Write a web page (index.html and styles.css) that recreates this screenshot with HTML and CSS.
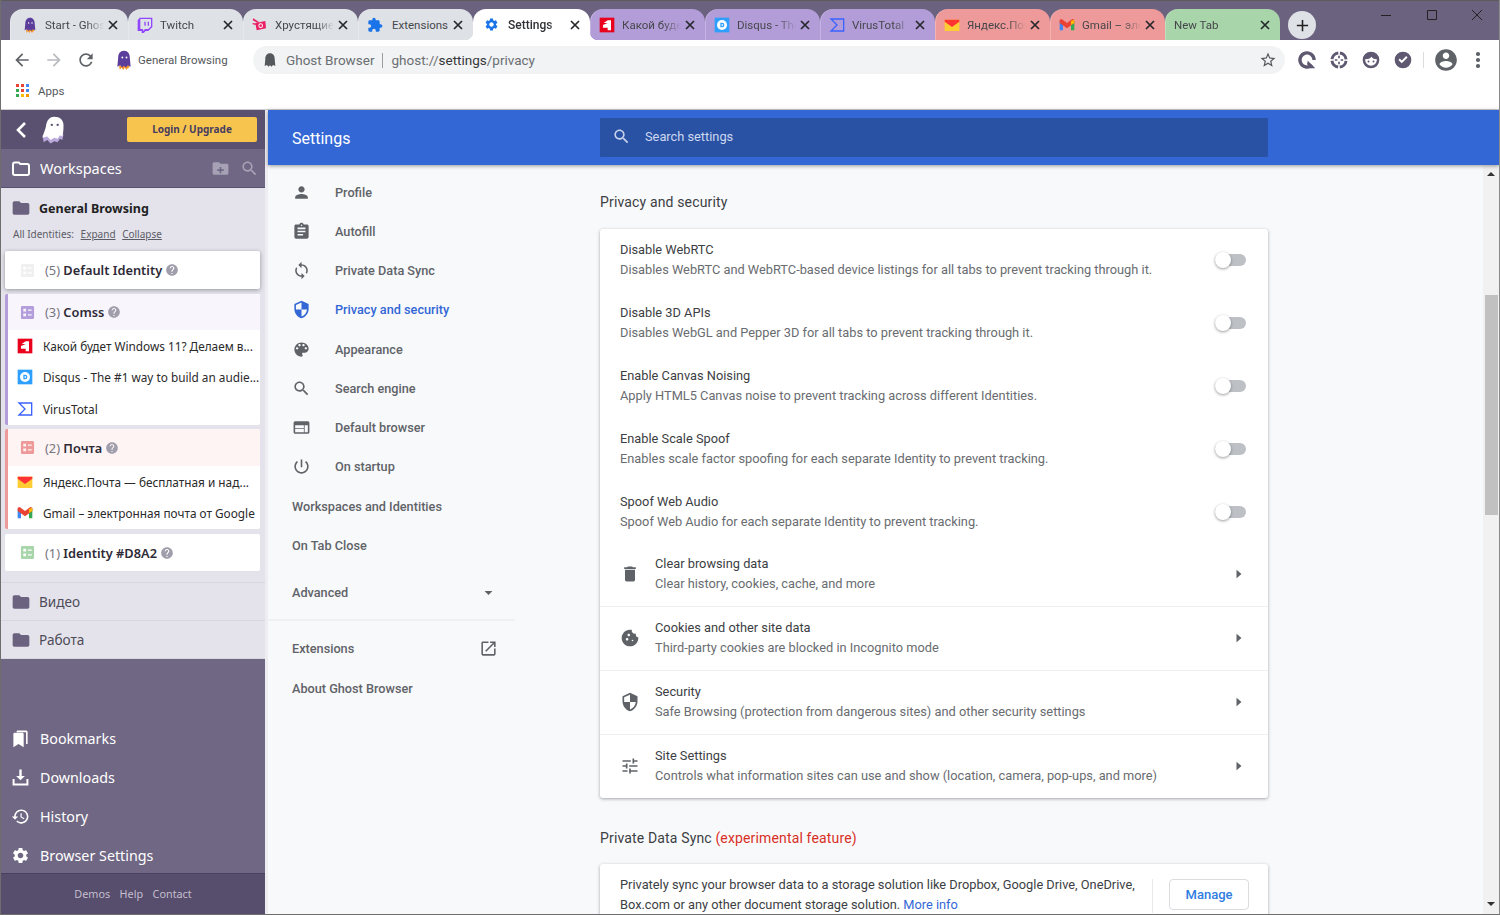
FILE: index.html
```html
<!DOCTYPE html>
<html lang="en">
<head>
  <meta charset="UTF-8">
  <title>Settings - Privacy and security</title>
  <link rel="stylesheet" href="styles.css">
</head>
<body>
  <svg class="sprite" xmlns="http://www.w3.org/2000/svg">
    <symbol id="i-close" viewBox="0 0 10 10"><path d="M1 1l8 8M9 1L1 9" fill="none" stroke="currentColor" stroke-width="1.7"/></symbol>
    <symbol id="i-person" viewBox="0 0 24 24"><path d="M12 12c2.21 0 4-1.79 4-4s-1.79-4-4-4-4 1.79-4 4 1.79 4 4 4zm0 2c-2.67 0-8 1.34-8 4v2h16v-2c0-2.66-5.33-4-8-4z"/></symbol>
    <symbol id="i-assign" viewBox="0 0 24 24"><path d="M19 3h-4.18C14.4 1.84 13.3 1 12 1c-1.3 0-2.4.84-2.82 2H5c-1.1 0-2 .9-2 2v14c0 1.1.9 2 2 2h14c1.1 0 2-.9 2-2V5c0-1.1-.9-2-2-2zm-7 0c.55 0 1 .45 1 1s-.45 1-1 1-1-.45-1-1 .45-1 1-1zm2 14H7v-2h7v2zm3-4H7v-2h10v2zm0-4H7V7h10v2z"/></symbol>
    <symbol id="i-sync" viewBox="0 0 24 24"><path d="M12 4V1L8 5l4 4V6c3.31 0 6 2.69 6 6 0 1.01-.25 1.97-.7 2.8l1.46 1.46C19.54 15.03 20 13.57 20 12c0-4.42-3.58-8-8-8zm0 14c-3.31 0-6-2.69-6-6 0-1.01.25-1.97.7-2.8L5.24 7.74C4.46 8.97 4 10.43 4 12c0 4.42 3.58 8 8 8v3l4-4-4-4v3z"/></symbol>
    <symbol id="i-shield" viewBox="0 0 24 24"><path d="M12 1L3 5v6c0 5.55 3.84 10.74 9 12 5.16-1.26 9-6.45 9-12V5l-9-4zm0 10.99h7c-.53 4.12-3.28 7.79-7 8.94V12H5V6.3l7-3.11v8.8z"/></symbol>
    <symbol id="i-palette" viewBox="0 0 24 24"><path d="M12 3c-4.97 0-9 4.03-9 9s4.03 9 9 9c.83 0 1.5-.67 1.5-1.5 0-.39-.15-.74-.39-1.01-.23-.26-.38-.61-.38-.99 0-.83.67-1.5 1.5-1.5H16c2.76 0 5-2.24 5-5 0-4.42-4.03-8-9-8zm-5.5 9c-.83 0-1.5-.67-1.5-1.5S5.67 9 6.5 9 8 9.67 8 10.5 7.33 12 6.5 12zm3-4C8.67 8 8 7.33 8 6.5S8.67 5 9.5 5s1.5.67 1.5 1.5S10.33 8 9.5 8zm5 0c-.83 0-1.5-.67-1.5-1.5S13.67 5 14.5 5s1.5.67 1.5 1.5S15.33 8 14.5 8zm3 4c-.83 0-1.5-.67-1.5-1.5S16.67 9 17.5 9s1.5.67 1.5 1.5-.67 1.5-1.5 1.5z"/></symbol>
    <symbol id="i-search" viewBox="0 0 24 24"><path d="M15.5 14h-.79l-.28-.27C15.41 12.59 16 11.11 16 9.5 16 5.91 13.09 3 9.5 3S3 5.91 3 9.5 5.91 16 9.5 16c1.61 0 3.09-.59 4.23-1.57l.27.28v.79l5 4.99L20.49 19l-4.99-5zm-6 0C7.01 14 5 11.99 5 9.5S7.01 5 9.5 5 14 7.01 14 9.5 11.99 14 9.5 14z"/></symbol>
    <symbol id="i-web" viewBox="0 0 24 24"><path d="M20 4H4c-1.1 0-2 .9-2 2v12c0 1.1.9 2 2 2h16c1.1 0 2-.9 2-2V6c0-1.1-.9-2-2-2zm-5 14H4v-4h11v4zm0-5H4V9h11v4zm5 5h-4V9h4v9z"/></symbol>
    <symbol id="i-power" viewBox="0 0 24 24"><path d="M13 3h-2v10h2V3zm4.83 2.17l-1.42 1.42C17.99 7.86 19 9.81 19 12c0 3.87-3.13 7-7 7s-7-3.13-7-7c0-2.19 1.01-4.14 2.58-5.42L6.17 5.17C4.23 6.82 3 9.26 3 12c0 4.97 4.03 9 9 9s9-4.03 9-9c0-2.74-1.23-5.18-3.17-6.83z"/></symbol>
    <symbol id="i-open" viewBox="0 0 24 24"><path d="M19 19H5V5h7V3H5c-1.11 0-2 .9-2 2v14c0 1.1.89 2 2 2h14c1.1 0 2-.9 2-2v-7h-2v7zM14 3v2h3.59l-9.83 9.83 1.41 1.41L19 6.41V10h2V3h-7z"/></symbol>
    <symbol id="i-delete" viewBox="0 0 24 24"><path d="M6 19c0 1.1.9 2 2 2h8c1.1 0 2-.9 2-2V7H6v12zM19 4h-3.5l-1-1h-5l-1 1H5v2h14V4z"/></symbol>
    <symbol id="i-cookie" viewBox="0 0 24 24"><path d="M21.95 10.99c-1.79-.03-3.7-1.95-2.68-4.22-2.97 1-5.78-1.59-5.19-4.56C7.11.74 2 6.41 2 12c0 5.52 4.48 10 10 10 5.89 0 10.54-5.08 9.95-11.01zM8.5 15c-.83 0-1.5-.67-1.5-1.5S7.67 12 8.5 12s1.5.67 1.5 1.5S9.33 15 8.5 15zm2-5C9.67 10 9 9.33 9 8.5S9.67 7 10.5 7s1.5.67 1.5 1.5-.67 1.5-1.5 1.5zm4.5 6c-.55 0-1-.45-1-1s.45-1 1-1 1 .45 1 1-.45 1-1 1z"/></symbol>
    <symbol id="i-tune" viewBox="0 0 24 24"><path d="M3 17v2h6v-2H3zM3 5v2h10V5H3zm10 16v-2h8v-2h-8v-2h-2v6h2zM7 9v2H3v2h4v2h2V9H7zm14 4v-2H11v2h10zm-6-4h2V7h4V5h-4V3h-2v6z"/></symbol>
    <symbol id="i-right" viewBox="0 0 24 24"><path d="M9 7l6 5-6 5z"/></symbol>
    <symbol id="i-down" viewBox="0 0 24 24"><path d="M7 10l5 5 5-5z"/></symbol>
    <symbol id="i-star" viewBox="0 0 24 24"><path d="M22 9.24l-7.19-.62L12 2 9.19 8.63 2 9.24l5.46 4.73L5.82 21 12 17.27 18.18 21l-1.63-7.03L22 9.24zM12 15.4l-3.76 2.27 1-4.28-3.32-2.88 4.38-.38L12 6.1l1.71 4.04 4.38.38-3.32 2.88 1 4.28L12 15.4z"/></symbol>
    <symbol id="i-account" viewBox="0 0 24 24"><path d="M12 2C6.48 2 2 6.48 2 12s4.48 10 10 10 10-4.48 10-10S17.52 2 12 2zm0 3c1.66 0 3 1.34 3 3s-1.34 3-3 3-3-1.34-3-3 1.34-3 3-3zm0 14.2c-2.5 0-4.71-1.28-6-3.22.03-1.99 4-3.08 6-3.08 1.99 0 5.97 1.09 6 3.08-1.29 1.94-3.5 3.22-6 3.22z"/></symbol>
    <symbol id="i-folder" viewBox="0 0 24 24"><path d="M10 4H4c-1.1 0-1.99.9-1.99 2L2 18c0 1.1.9 2 2 2h16c1.1 0 2-.9 2-2V8c0-1.1-.9-2-2-2h-8l-2-2z"/></symbol>
    <symbol id="i-gear" viewBox="0 0 24 24"><path d="M19.14 12.94c.04-.3.06-.61.06-.94 0-.32-.02-.64-.07-.94l2.03-1.58c.18-.14.23-.41.12-.61l-1.92-3.32c-.12-.22-.37-.29-.59-.22l-2.39.96c-.5-.38-1.03-.7-1.62-.94l-.36-2.54c-.04-.24-.24-.41-.48-.41h-3.84c-.24 0-.43.17-.47.41l-.36 2.54c-.59.24-1.13.57-1.62.94l-2.39-.96c-.22-.08-.47 0-.59.22L2.74 8.87c-.12.21-.08.47.12.61l2.03 1.58c-.05.3-.09.63-.09.94s.02.64.07.94l-2.03 1.58c-.18.14-.23.41-.12.61l1.92 3.32c.12.22.37.29.59.22l2.39-.96c.5.38 1.03.7 1.62.94l.36 2.54c.05.24.24.41.48.41h3.84c.24 0 .44-.17.47-.41l.36-2.54c.59-.24 1.13-.56 1.62-.94l2.39.96c.22.08.47 0 .59-.22l1.92-3.32c.12-.22.07-.47-.12-.61l-2.01-1.58zM12 15.6c-1.98 0-3.6-1.62-3.6-3.6s1.62-3.6 3.6-3.6 3.6 1.62 3.6 3.6-1.62 3.6-3.6 3.6z"/></symbol>
    <symbol id="i-history" viewBox="0 0 24 24"><path d="M13 3c-4.97 0-9 4.03-9 9H1l3.89 3.89.07.14L9 12H6c0-3.87 3.13-7 7-7s7 3.13 7 7-3.13 7-7 7c-1.93 0-3.68-.79-4.94-2.06l-1.42 1.42C8.27 19.99 10.51 21 13 21c4.97 0 9-4.03 9-9s-4.03-9-9-9zm-1 5v5l4.28 2.54.72-1.21-3.5-2.08V8H12z"/></symbol>
    <symbol id="i-download" viewBox="0 0 24 24"><path d="M10.5 2h3v8h4L12 15.5 6.500 10h4zM2 14h2.500v5.500h15V14H22v8H2z"/></symbol>
    <symbol id="i-bookmarks" viewBox="0 0 24 24"><path d="M3 6.500c0-1 .8-1.800 1.800-1.800h9.400c1 0 1.800.8 1.800 1.800V23l-6.500-4L3 23zM7 3.500C7 2.700 7.700 2 8.500 2H19c1.100 0 2 .9 2 2v15h-2V4H7z"/></symbol>
    <symbol id="i-help" viewBox="0 0 24 24"><path d="M12 2C6.480 2 2 6.480 2 12s4.480 10 10 10 10-4.480 10-10S17.520 2 12 2zm1 17h-2v-2h2v2zm2.070-7.750l-.9.920C13.450 12.900 13 13.500 13 15h-2v-.5c0-1.100.45-2.100 1.170-2.830l1.240-1.260c.37-.36.590-.86.590-1.410 0-1.100-.9-2-2-2s-2 .9-2 2H8c0-2.210 1.790-4 4-4s4 1.790 4 4c0 .88-.36 1.680-.93 2.250z"/></symbol>
    <symbol id="i-identity" viewBox="0 0 16 16"><path fill-rule="evenodd" d="M2.500 1h11A1.500 1.500 0 0 1 15 2.500v11a1.500 1.500 0 0 1-1.500 1.500h-11A1.500 1.500 0 0 1 1 13.500v-11A1.500 1.500 0 0 1 2.500 1zM3.500 4v3h3V4zm5 .8v1.400h4V4.800zM3.500 9v3h3V9zm5 .8v1.400h4V9.800z"/></symbol>
    <symbol id="f-ghost" viewBox="0 0 24 24"><path fill="#f59324" d="M6 19l1 5 2-3 2 3 2-3 2 3 2-3 1 1 1-4z"/><path fill="#5b3e9c" d="M12 1C7.400 1 5 4.800 5 9.500L4 20l3.400-1.600L9.700 21l2.300-2.200 2.300 2.200 2.300-2.600L20 20 19 9.500C19 4.800 16.600 1 12 1z"/><circle cx="10" cy="9" r="1.100" fill="#fff"/><circle cx="15" cy="9" r="1.100" fill="#fff"/></symbol>
    <symbol id="f-ghost-gray" viewBox="0 0 24 24"><path d="M12 2C7.400 2 5 5.800 5 10L4 21l3.400-1.600L9.700 22l2.300-2.200 2.300 2.200 2.300-2.600L20 21 19 10C19 5.800 16.600 2 12 2z"/></symbol>
    <symbol id="f-twitch" viewBox="0 0 24 24"><path fill="#9146ff" d="M4 1L1 5v16h6v3h3l3-3h4l6-6V1zm17 13l-4 4h-5l-3 3v-3H5V3h16z"/><path fill="#9146ff" d="M11 7h2v6h-2zM16 7h2v6h-2z"/></symbol>
    <symbol id="f-crunch" viewBox="0 0 24 24"><path fill="#e91e63" d="M5 9l15-3 1 11-14 3z"/><path fill="#e91e63" d="M2 2l8 5-1 2-8-4zM1 9l6 1v2l-6-1z"/><circle cx="13" cy="13" r="3.500" fill="#fff"/><circle cx="13" cy="13" r="2" fill="#e91e63"/></symbol>
    <symbol id="f-puzzle" viewBox="0 0 24 24"><path fill="#1a73e8" d="M20.500 11H19V7c0-1.100-.9-2-2-2h-4V3.500C13 2.120 11.880 1 10.500 1S8 2.120 8 3.500V5H4c-1.100 0-1.990.9-1.990 2v3.800H3.500c1.490 0 2.700 1.210 2.700 2.700s-1.210 2.700-2.700 2.700H2V20c0 1.100.9 2 2 2h3.800v-1.500c0-1.490 1.210-2.700 2.700-2.700s2.700 1.210 2.700 2.700V22H17c1.100 0 2-.9 2-2v-4h1.500c1.380 0 2.500-1.120 2.500-2.500S21.880 11 20.500 11z"/></symbol>
    <symbol id="f-one" viewBox="0 0 24 24"><path fill="#e8001c" d="M1 1h22v22H1z"/><path fill="#fff" d="M13 5h5v15h-5v-4H6v-4l7-3h-6z"/></symbol>
    <symbol id="f-disqus" viewBox="0 0 24 24"><path fill="#2e9fff" d="M1 1h22v22H1z"/><circle cx="12" cy="12" r="7.500" fill="#fff"/><path fill="#2e9fff" d="M9.500 8.500h2.600a3.500 3.500 0 0 1 0 7H9.500zm2 2v3h.6a1.500 1.500 0 0 0 0-3z"/></symbol>
    <symbol id="f-virus" viewBox="0 0 24 24"><path fill="none" stroke="#3b61ff" stroke-width="2" d="M3 3h19v18H3l9-9z"/></symbol>
    <symbol id="f-yandex" viewBox="0 0 24 24"><path fill="#ffcc33" d="M1 4h22v17H1z"/><path fill="#f33" d="M1 4h22v3l-11 8L1 7z"/></symbol>
    <symbol id="f-gmail" viewBox="0 0 24 24"><path fill="#4285f4" d="M1 6v14h5V10z"/><path fill="#34a853" d="M23 6v14h-5V10z"/><path fill="#ea4335" d="M1 4v5l11 8 11-8V4l-3-1-8 6-8-6z"/><path fill="#fbbc04" d="M18 6l5-2v5l-5 3z"/></symbol>
    <symbol id="x-grammar" viewBox="0 0 24 24"><path fill="none" stroke="currentColor" stroke-width="4" d="M18 18a8.500 8.500 0 1 1 2.500-6"/><path fill="currentColor" d="M13 13l9 9h-6l-4-5z"/></symbol>
    <symbol id="x-target" viewBox="0 0 24 24"><circle cx="12" cy="12" r="8.500" fill="none" stroke="currentColor" stroke-width="3.500" stroke-dasharray="11.300 2"  stroke-dashoffset="-1"/><path fill="currentColor" d="M11 7h2v3h-2zM11 14h2v3h-2zM7 11h3v2H7zM14 11h3v2h-3z"/></symbol>
    <symbol id="x-face" viewBox="0 0 24 24"><path fill-rule="evenodd" d="M12 2a10 10 0 1 1 0 20 10 10 0 0 1 0-20zm7 9c-3 0-5-1-6.500-3-1 2-4 3-7.500 3v1a7 7 0 0 0 14 0zM9 12.500a1.200 1.200 0 1 1 0 2.400 1.200 1.200 0 0 1 0-2.400zm6 0a1.200 1.200 0 1 1 0 2.400 1.200 1.200 0 0 1 0-2.400z"/></symbol>
    <symbol id="x-check" viewBox="0 0 24 24"><path fill-rule="evenodd" d="M12 2a10 10 0 1 1 0 20 10 10 0 0 1 0-20zm-1.500 13.800l7-6.800-1.700-1.700-5.300 5.200-2.300-2.300L6.500 11.900z"/></symbol>
  </svg>

  <div class="window">
    <div class="titlebar">
      <div class="tab tab-gray tab-first">
        <svg class="fav"><use href="#f-ghost"/></svg><span class="tab-title">Start - Ghost</span><svg class="tab-x"><use href="#i-close"/></svg>
      </div>
      <div class="tab tab-gray">
        <svg class="fav"><use href="#f-twitch"/></svg><span class="tab-title">Twitch</span><svg class="tab-x"><use href="#i-close"/></svg>
      </div>
      <div class="tab tab-gray">
        <svg class="fav"><use href="#f-crunch"/></svg><span class="tab-title">Хрустящие</span><svg class="tab-x"><use href="#i-close"/></svg>
      </div>
      <div class="tab tab-gray tab-ext">
        <svg class="fav"><use href="#f-puzzle"/></svg><span class="tab-title">Extensions</span><svg class="tab-x"><use href="#i-close"/></svg>
      </div>
      <div class="tab tab-active">
        <svg class="fav fav-blue"><use href="#i-gear"/></svg><span class="tab-title">Settings</span><svg class="tab-x"><use href="#i-close"/></svg>
      </div>
      <div class="tab tab-purple">
        <svg class="fav"><use href="#f-one"/></svg><span class="tab-title">Какой будет</span><svg class="tab-x"><use href="#i-close"/></svg>
      </div>
      <div class="tab tab-purple">
        <svg class="fav"><use href="#f-disqus"/></svg><span class="tab-title">Disqus - The</span><svg class="tab-x"><use href="#i-close"/></svg>
      </div>
      <div class="tab tab-purple">
        <svg class="fav"><use href="#f-virus"/></svg><span class="tab-title">VirusTotal</span><svg class="tab-x"><use href="#i-close"/></svg>
      </div>
      <div class="tab tab-red">
        <svg class="fav"><use href="#f-yandex"/></svg><span class="tab-title">Яндекс.Почта</span><svg class="tab-x"><use href="#i-close"/></svg>
      </div>
      <div class="tab tab-red">
        <svg class="fav"><use href="#f-gmail"/></svg><span class="tab-title">Gmail – элек</span><svg class="tab-x"><use href="#i-close"/></svg>
      </div>
      <div class="tab tab-green">
        <span class="tab-title">New Tab</span><svg class="tab-x"><use href="#i-close"/></svg>
      </div>
      <div class="new-tab"><svg viewBox="0 0 16 16"><path d="M8 2v12M2 8h12" stroke="#222" stroke-width="1.700" fill="none"/></svg></div>
      <div class="win-controls">
        <svg viewBox="0 0 12 12"><path d="M1 6.500h10" stroke="#222" stroke-width="1"/></svg>
        <svg viewBox="0 0 12 12"><path d="M1.500 1.500h9v9h-9z" stroke="#222" stroke-width="1" fill="none"/></svg>
        <svg viewBox="0 0 12 12"><path d="M1 1l10 10M11 1L1 11" stroke="#222" stroke-width="1" fill="none"/></svg>
      </div>
    </div>

    <div class="toolbar">
      <div class="tool-btn"><svg viewBox="0 0 24 24"><path d="M20 11H7.830l5.590-5.590L12 4l-8 8 8 8 1.410-1.410L7.830 13H20z"/></svg></div>
      <div class="tool-btn tool-off"><svg viewBox="0 0 24 24"><path d="M12 4l-1.410 1.410L16.170 11H4v2h12.170l-5.580 5.590L12 20l8-8z"/></svg></div>
      <div class="tool-btn"><svg viewBox="0 0 24 24"><path d="M17.650 6.350C16.200 4.900 14.210 4 12 4c-4.420 0-7.990 3.580-7.990 8s3.570 8 7.990 8c3.730 0 6.840-2.550 7.730-6h-2.080c-.82 2.330-3.040 4-5.650 4-3.310 0-6-2.690-6-6s2.690-6 6-6c1.660 0 3.140.69 4.220 1.780L13 11h7V4l-2.350 2.350z"/></svg></div>
      <div class="profile"><svg><use href="#f-ghost"/></svg><span>General Browsing</span></div>
      <div class="omnibox">
        <svg class="omni-ghost"><use href="#f-ghost-gray"/></svg>
        <span class="omni-name">Ghost Browser</span>
        <span class="omni-url">ghost://<b>settings</b>/privacy</span>
        <svg class="omni-star"><use href="#i-star"/></svg>
      </div>
      <div class="ext"><svg><use href="#x-grammar"/></svg></div>
      <div class="ext"><svg><use href="#x-target"/></svg></div>
      <div class="ext"><svg><use href="#x-face"/></svg></div>
      <div class="ext"><svg><use href="#x-check"/></svg></div>
      <div class="tool-sep"></div>
      <div class="avatar"><svg><use href="#i-account"/></svg></div>
      <div class="menu-dots"><i></i><i></i><i></i></div>
    </div>

    <div class="bookmarks">
      <svg class="apps" viewBox="0 0 13 13">
        <rect width="3" height="3" fill="#ea4335"/><rect x="5" width="3" height="3" fill="#ea4335"/><rect x="10" width="3" height="3" fill="#4285f4"/>
        <rect y="5" width="3" height="3" fill="#34a853"/><rect x="5" y="5" width="3" height="3" fill="#ea4335"/><rect x="10" y="5" width="3" height="3" fill="#4285f4"/>
        <rect y="10" width="3" height="3" fill="#34a853"/><rect x="5" y="10" width="3" height="3" fill="#fbbc05"/><rect x="10" y="10" width="3" height="3" fill="#f29900"/>
      </svg>
      <span>Apps</span>
    </div>

    <div class="main">
      <aside class="sidebar">
        <div class="side-top">
          <svg class="side-back" viewBox="0 0 12 18"><path d="M10 2L3 9l7 7" fill="none" stroke="#fff" stroke-width="2.600"/></svg>
          <svg class="side-logo" viewBox="0 0 24 24"><path fill="#b9a9dc" d="M3 17l1 6 3-2 3 3 3-2 3 1 2-3 2 1 1-5z"/><path fill="#fff" d="M13 1C8.500 1 6.500 5 6 9c-.4 3-2.500 7-3 10l4-1 3 3 3-2 3 1 2-3 2 1c1-3 1-7 1-10 0-4-3-7-8-7z"/><circle cx="11" cy="8" r="1" fill="#5a5070"/><circle cx="16" cy="8" r="1" fill="#5a5070"/></svg>
          <div class="login-btn">Login / Upgrade</div>
        </div>
        <div class="side-ws">
          <svg class="ws-icon" viewBox="0 0 18 15"><path d="M1 3.500C1 2.400 1.700 1.500 2.800 1.500h4l1.500 1.500h7c1 0 1.700.8 1.700 1.700v7.600c0 1-.7 1.700-1.700 1.700H2.800c-1 0-1.800-.7-1.800-1.700z" fill="none" stroke="#fff" stroke-width="2"/></svg>
          <span class="ws-label">Workspaces</span>
          <svg class="ws-tool ws-add" viewBox="0 0 24 24"><path fill-rule="evenodd" d="M10 4H4c-1.100 0-2 .9-2 2v12c0 1.100.9 2 2 2h16c1.100 0 2-.9 2-2V8c0-1.100-.9-2-2-2h-8zm1 6h2v3h3v2h-3v3h-2v-3H8v-2h3z"/></svg>
          <svg class="ws-tool"><use href="#i-search"/></svg>
        </div>

        <div class="ws-open">
          <div class="ws-title"><svg><use href="#i-folder"/></svg><b>General Browsing</b></div>
          <div class="ws-links">All Identities: <u>Expand</u> <u>Collapse</u></div>

          <div class="id-card id-plain id-default">
            <div class="id-head">
              <svg class="id-icon ic-none"><use href="#i-identity"/></svg>
              <span class="id-name"><em>(5)</em> <b>Default Identity</b></span>
              <svg class="id-help"><use href="#i-help"/></svg>
            </div>
          </div>

          <div class="id-card id-purple">
            <div class="id-head">
              <svg class="id-icon"><use href="#i-identity"/></svg>
              <span class="id-name"><em>(3)</em> <b>Comss</b></span>
              <svg class="id-help"><use href="#i-help"/></svg>
            </div>
            <div class="id-tab"><svg><use href="#f-one"/></svg><span>Какой будет Windows 11? Делаем в...</span></div>
            <div class="id-tab"><svg><use href="#f-disqus"/></svg><span>Disqus - The #1 way to build an audie...</span></div>
            <div class="id-tab"><svg><use href="#f-virus"/></svg><span>VirusTotal</span></div>
          </div>

          <div class="id-card id-red">
            <div class="id-head">
              <svg class="id-icon"><use href="#i-identity"/></svg>
              <span class="id-name"><em>(2)</em> <b>Почта</b></span>
              <svg class="id-help"><use href="#i-help"/></svg>
            </div>
            <div class="id-tab"><svg><use href="#f-yandex"/></svg><span>Яндекс.Почта — бесплатная и над...</span></div>
            <div class="id-tab"><svg><use href="#f-gmail"/></svg><span>Gmail – электронная почта от Google</span></div>
          </div>

          <div class="id-card id-plain id-green">
            <div class="id-head">
              <svg class="id-icon"><use href="#i-identity"/></svg>
              <span class="id-name"><em>(1)</em> <b>Identity #D8A2</b></span>
              <svg class="id-help"><use href="#i-help"/></svg>
            </div>
          </div>
        </div>

        <div class="ws-row"><svg><use href="#i-folder"/></svg><span>Видео</span></div>
        <div class="ws-row"><svg><use href="#i-folder"/></svg><span>Работа</span></div>

        <div class="side-nav">
          <div class="side-link"><svg><use href="#i-bookmarks"/></svg><span>Bookmarks</span></div>
          <div class="side-link"><svg><use href="#i-download"/></svg><span>Downloads</span></div>
          <div class="side-link"><svg><use href="#i-history"/></svg><span>History</span></div>
          <div class="side-link"><svg><use href="#i-gear"/></svg><span>Browser Settings</span></div>
        </div>
        <div class="side-foot"><span>Demos</span><span>Help</span><span>Contact</span></div>
      </aside>

      <section class="settings">
        <header class="set-head">
          <h1>Settings</h1>
          <div class="set-search"><svg><use href="#i-search"/></svg><span>Search settings</span></div>
        </header>
        <div class="set-body">
          <nav class="set-nav">
            <div class="nav-item"><svg><use href="#i-person"/></svg><span>Profile</span></div>
            <div class="nav-item"><svg><use href="#i-assign"/></svg><span>Autofill</span></div>
            <div class="nav-item"><svg><use href="#i-sync"/></svg><span>Private Data Sync</span></div>
            <div class="nav-item nav-on"><svg><use href="#i-shield"/></svg><span>Privacy and security</span></div>
            <div class="nav-item"><svg><use href="#i-palette"/></svg><span>Appearance</span></div>
            <div class="nav-item"><svg><use href="#i-search"/></svg><span>Search engine</span></div>
            <div class="nav-item"><svg><use href="#i-web"/></svg><span>Default browser</span></div>
            <div class="nav-item"><svg><use href="#i-power"/></svg><span>On startup</span></div>
            <div class="nav-item nav-plain"><span>Workspaces and Identities</span></div>
            <div class="nav-item nav-plain"><span>On Tab Close</span></div>
            <div class="nav-item nav-plain nav-adv"><span>Advanced</span><svg><use href="#i-down"/></svg></div>
            <div class="nav-line"></div>
            <div class="nav-item nav-plain"><span>Extensions</span><svg class="nav-open"><use href="#i-open"/></svg></div>
            <div class="nav-item nav-plain"><span>About Ghost Browser</span></div>
          </nav>

          <div class="set-content">
            <h2>Privacy and security</h2>
            <div class="card">
              <div class="row-toggle">
                <div class="row-text"><div class="row-label">Disable WebRTC</div><div class="row-sub">Disables WebRTC and WebRTC-based device listings for all tabs to prevent tracking through it.</div></div>
                <div class="toggle"></div>
              </div>
              <div class="row-toggle">
                <div class="row-text"><div class="row-label">Disable 3D APIs</div><div class="row-sub">Disables WebGL and Pepper 3D for all tabs to prevent tracking through it.</div></div>
                <div class="toggle"></div>
              </div>
              <div class="row-toggle">
                <div class="row-text"><div class="row-label">Enable Canvas Noising</div><div class="row-sub">Apply HTML5 Canvas noise to prevent tracking across different Identities.</div></div>
                <div class="toggle"></div>
              </div>
              <div class="row-toggle">
                <div class="row-text"><div class="row-label">Enable Scale Spoof</div><div class="row-sub">Enables scale factor spoofing for each separate Identity to prevent tracking.</div></div>
                <div class="toggle"></div>
              </div>
              <div class="row-toggle">
                <div class="row-text"><div class="row-label">Spoof Web Audio</div><div class="row-sub">Spoof Web Audio for each separate Identity to prevent tracking.</div></div>
                <div class="toggle"></div>
              </div>
              <div class="row-link row-first">
                <svg class="row-icon"><use href="#i-delete"/></svg>
                <div class="row-text"><div class="row-label">Clear browsing data</div><div class="row-sub">Clear history, cookies, cache, and more</div></div>
                <svg class="row-arrow"><use href="#i-right"/></svg>
              </div>
              <div class="row-link">
                <svg class="row-icon"><use href="#i-cookie"/></svg>
                <div class="row-text"><div class="row-label">Cookies and other site data</div><div class="row-sub">Third-party cookies are blocked in Incognito mode</div></div>
                <svg class="row-arrow"><use href="#i-right"/></svg>
              </div>
              <div class="row-link">
                <svg class="row-icon"><use href="#i-shield"/></svg>
                <div class="row-text"><div class="row-label">Security</div><div class="row-sub">Safe Browsing (protection from dangerous sites) and other security settings</div></div>
                <svg class="row-arrow"><use href="#i-right"/></svg>
              </div>
              <div class="row-link">
                <svg class="row-icon"><use href="#i-tune"/></svg>
                <div class="row-text"><div class="row-label">Site Settings</div><div class="row-sub">Controls what information sites can use and show (location, camera, pop-ups, and more)</div></div>
                <svg class="row-arrow"><use href="#i-right"/></svg>
              </div>
            </div>

            <h2 class="h-second">Private Data Sync <span class="exp">(experimental feature)</span></h2>
            <div class="card card-sync">
              <p>Privately sync your browser data to a storage solution like Dropbox, Google Drive, OneDrive, Box.com or any other document storage solution. <a>More info</a></p>
              <div class="sync-side"><div class="manage">Manage</div></div>
            </div>
          </div>

          <div class="scrollbar">
            <div class="sb-up"></div>
            <div class="sb-thumb"></div>
            <div class="sb-down"></div>
          </div>
        </div>
      </section>
    </div>
  </div>
</body>
</html>
```

FILE: styles.css
```css
* {
  box-sizing: border-box;
}
html, body {
  margin: 0;
  padding: 0;
  height: 100%;
  overflow: hidden;
}
body {
  font-family: "Noto Sans", sans-serif;
  background: #fff;
}
svg {
  display: block;
  flex: none;
}
.sprite {
  display: none;
}
.window {
  width: 1500px;
  height: 915px;
  display: flex;
  flex-direction: column;
  overflow: hidden;
  border: 1px solid #6e6e6e;
  border-top: 0;
  border-right-color: #8a8a8a;
}

/* title bar + tabs */
.titlebar {
  height: 40px;
  flex: none;
  display: flex;
  align-items: flex-end;
  padding-left: 9px;
  background: #6b6280;
  border-top: 1px solid #5c5c5c;
  position: relative;
}
.tab {
  width: 115px;
  height: 31px;
  flex: none;
  display: flex;
  align-items: center;
  padding: 0 10px 0 9px;
  border-radius: 13px 13px 0 0;
  font-family: Roboto, sans-serif;
  font-size: 11.500px;
  color: #45474b;
  box-shadow: inset 1px 0 rgba(255, 255, 255, .25);
}
.tab-first {
  width: 118px;
  padding-left: 12px;
}
.tab-gray { background: #dee1e6; }
.tab-purple { background: #b29dd8; }
.tab-red { background: #ef9a9a; }
.tab-green { background: #a8d5aa; }
.tab-ext .fav {
  margin-right: 9px;
}
.tab-ext .tab-title {
  -webkit-mask-image: none;
  mask-image: none;
}
.tab-active {
  width: 117px;
  background: #fff;
  padding-left: 11px;
  color: #2e3033;
  font-size: 12px;
  font-weight: 500;
  position: relative;
  box-shadow: none;
}
.tab-active::before,
.tab-active::after {
  content: "";
  position: absolute;
  bottom: 0;
  width: 8px;
  height: 8px;
}
.tab-active::before {
  left: -8px;
  background: radial-gradient(circle at 0 0, transparent 8px, #fff 8.500px);
}
.tab-active::after {
  right: -8px;
  background: radial-gradient(circle at 100% 0, transparent 8px, #fff 8.500px);
}
.fav {
  width: 16px;
  height: 16px;
  margin-right: 7px;
}
.fav-blue {
  width: 15px;
  height: 15px;
  margin-right: 9px;
  fill: #1a73e8;
}
.tab-title {
  flex: 1;
  min-width: 0;
  white-space: nowrap;
  overflow: hidden;
  -webkit-mask-image: linear-gradient(to left, transparent 0, #000 18px);
  mask-image: linear-gradient(to left, transparent 0, #000 18px);
}
.tab-x {
  width: 10px;
  height: 10px;
  margin-left: 4px;
  color: #26282b;
}
.new-tab {
  width: 28px;
  height: 28px;
  margin: 0 0 1px 8px;
  border-radius: 50%;
  background: #dee1e6;
  display: flex;
  align-items: center;
  justify-content: center;
}
.new-tab svg {
  width: 15px;
  height: 15px;
}
.win-controls {
  margin-left: auto;
  align-self: flex-start;
  display: flex;
  gap: 33.500px;
  padding: 8px 16px 0 0;
}
.win-controls svg {
  width: 12px;
  height: 12px;
}

/* toolbar */
.toolbar {
  height: 40px;
  flex: none;
  display: flex;
  align-items: center;
  padding-left: 5px;
  background: #fff;
}
.tool-btn {
  width: 32px;
  display: flex;
  justify-content: center;
}
.tool-btn svg {
  width: 20px;
  height: 20px;
  fill: #5f6368;
}
.tool-off svg {
  fill: #b9bbbe;
}
.profile {
  width: 139px;
  margin-left: 12px;
  display: flex;
  align-items: center;
  gap: 4px;
  font-family: Roboto, sans-serif;
  font-size: 11.500px;
  color: #55585c;
}
.profile svg {
  width: 20px;
  height: 20px;
}
.omnibox {
  width: 1032px;
  height: 28px;
  border-radius: 14px;
  background: #f1f3f4;
  display: flex;
  align-items: center;
  padding: 0 8px 0 9px;
  font-family: Roboto, sans-serif;
  font-size: 13.500px;
  color: #6b6e72;
}
.omni-ghost {
  width: 16px;
  height: 16px;
  margin-right: 8px;
  fill: #55585c;
}
.omni-name {
  padding-right: 8px;
  border-right: 1px solid #9a9da1;
  line-height: 15px;
  margin-right: 8px;
}
.omni-url {
  flex: 1;
}
.omni-url b {
  font-weight: 400;
  color: #35373a;
}
.omni-star {
  width: 18px;
  height: 18px;
  fill: #55585c;
}
.ext {
  width: 32px;
  display: flex;
  justify-content: center;
  color: #5e5870;
}
.omnibox + .ext {
  margin-left: 6px;
}
.ext svg {
  width: 20px;
  height: 20px;
  fill: currentColor;
}
.tool-sep {
  width: 1px;
  height: 16px;
  margin-left: 4px;
  background: #dcdcdc;
}
.avatar {
  width: 38px;
  margin-left: 3px;
  display: flex;
  justify-content: center;
}
.avatar svg {
  width: 26px;
  height: 26px;
  fill: #5f6368;
}
.menu-dots {
  width: 26px;
  display: flex;
  flex-direction: column;
  align-items: center;
  gap: 2.500px;
}
.menu-dots i {
  width: 3.500px;
  height: 3.500px;
  border-radius: 50%;
  background: #5f6368;
}
.bookmarks {
  height: 30px;
  flex: none;
  display: flex;
  align-items: center;
  gap: 9px;
  padding: 0 0 8px 15px;
  font-family: Roboto, sans-serif;
  font-size: 11.500px;
  color: #55585c;
  border-bottom: 1px solid #cfcfcf;
}
.apps {
  width: 13px;
  height: 13px;
}

/* sidebar */
.main {
  flex: 1;
  min-height: 0;
  display: flex;
}
.sidebar {
  width: 267px;
  flex: none;
  display: flex;
  flex-direction: column;
  background: #6f6783;
  border-right: 3px solid #eeeef2;
}
.side-top {
  height: 39px;
  flex: none;
  display: flex;
  align-items: center;
  background: #5a5070;
  padding-left: 14px;
}
.side-back {
  width: 12px;
  height: 18px;
}
.side-logo {
  width: 28px;
  height: 31px;
  margin-left: 12px;
}
.login-btn {
  width: 130px;
  height: 25px;
  margin-left: 60px;
  border-radius: 2px;
  background: #f7c44e;
  color: #473d60;
  font-size: 10px;
  font-weight: 700;
  line-height: 25px;
  text-align: center;
}
.side-ws {
  height: 39px;
  flex: none;
  display: flex;
  align-items: center;
  padding: 0 6px 0 11px;
  border-bottom: 1px solid #5a5070;
}
.ws-icon {
  width: 18px;
  height: 15px;
}
.ws-label {
  flex: 1;
  margin-left: 10px;
  color: #fff;
  font-size: 14.500px;
}
.ws-tool {
  width: 19px;
  height: 19px;
  fill: #a7a1b5;
}
.ws-add {
  margin-right: 10px;
}
.ws-open {
  background: #e4e3ec;
  padding: 0 5px 6px 4px;
  border-bottom: 1px solid #d8d7e0;
}
.ws-title {
  height: 40px;
  display: flex;
  align-items: center;
  font-size: 12.500px;
  color: #222;
  padding: 0 0 0 6px;
}
.ws-title svg {
  width: 20px;
  height: 20px;
  fill: #6b6280;
  margin-right: 8px;
}
.ws-links {
  font-size: 10px;
  color: #5c5c66;
  height: 14px;
  line-height: 14px;
  margin-top: -1px;
  padding-left: 8px;
  margin-bottom: 10px;
}
.ws-links u {
  margin-left: 4px;
}
.id-card {
  background: #fff;
  border-radius: 2px;
  margin-bottom: 5px;
  font-size: 12.800px;
}
.id-default {
  box-shadow: 0 1px 4px rgba(0, 0, 0, .35);
}
.id-head {
  height: 37px;
  display: flex;
  align-items: center;
  padding-left: 15px;
}
.id-icon {
  width: 15px;
  height: 15px;
  margin-right: 10px;
}
.ic-none {
  fill: #f0f0f0;
}
.id-name {
  color: #333;
}
.id-name em {
  font-style: normal;
  color: #77757f;
}
.id-name b {
  font-weight: 600;
  color: #2d2a36;
}
.id-help {
  width: 14px;
  height: 14px;
  margin-left: 3px;
  fill: #a19eac;
}
.id-default .id-head {
  height: 38px;
}
.id-purple {
  border-left: 3px solid #b39ddb;
  margin-bottom: 4.600px;
}
.id-purple .id-head {
  height: 36px;
  background: #f8f6fc;
  padding-left: 12px;
}
.id-purple .id-tab {
  height: 31.600px;
}
.id-purple .id-icon {
  fill: #b39ddb;
}
.id-red {
  border-left: 3px solid #ef9a9a;
}
.id-red .id-head {
  background: #fdf4f3;
  padding-left: 12px;
}
.id-red .id-icon {
  fill: #ef9a9a;
}
.id-green .id-icon {
  fill: #a8d5aa;
}
.id-tab {
  height: 31.400px;
  display: flex;
  align-items: center;
  padding-left: 9px;
  font-size: 11.800px;
  color: #2a2a2a;
  white-space: nowrap;
  overflow: hidden;
}
.id-tab svg {
  width: 16px;
  height: 16px;
  margin-right: 10px;
}
.ws-row {
  height: 38px;
  flex: none;
  display: flex;
  align-items: center;
  padding-left: 10px;
  background: #e4e3ec;
  border-bottom: 1px solid #d8d7e0;
  font-size: 13.600px;
  color: #4e4b58;
}
.ws-row svg {
  width: 20px;
  height: 20px;
  fill: #6b6280;
  margin-right: 8px;
}
.side-nav {
  margin-top: auto;
  margin-bottom: -2.500px;
}
.side-link {
  height: 39.200px;
  display: flex;
  align-items: center;
  padding-left: 10px;
  font-size: 14.300px;
  color: #fff;
}
.side-link svg {
  width: 19px;
  height: 19px;
  fill: #fff;
  margin-right: 10px;
}
.side-foot {
  height: 41px;
  flex: none;
  display: flex;
  align-items: center;
  justify-content: center;
  gap: 9.500px;
  padding-bottom: 2px;
  position: relative;
  background: #574d6c;
  border-top: 1px solid #4b415f;
  font-size: 10.800px;
  color: #c3bfce;
}

/* settings page */
.settings {
  flex: 1;
  min-width: 0;
  display: flex;
  flex-direction: column;
  font-family: Roboto, sans-serif;
  background: #f8f9fb;
}
.set-head {
  height: 55px;
  flex: none;
  display: flex;
  align-items: center;
  background: #3367d6;
  box-shadow: 0 1px 4px rgba(0, 0, 0, .4);
  position: relative;
  padding-left: 24px;
}
.set-head h1 {
  width: 308px;
  margin: 2px 0 0;
  font-size: 16px;
  font-weight: 400;
  color: #fff;
}
.set-search {
  width: 668px;
  height: 39px;
  margin-top: -1px;
  display: flex;
  align-items: center;
  padding: 0 0 1px 12px;
  border-radius: 1px;
  background: #2a52a4;
  color: #cdd8f0;
  font-size: 12.800px;
}
.set-search svg {
  width: 19px;
  height: 19px;
  margin-right: 14px;
  fill: #c6d2ec;
}
.set-body {
  flex: 1;
  min-height: 0;
  display: flex;
  overflow: hidden;
}
.set-nav {
  width: 247px;
  flex: none;
  padding-top: 7.500px;
}
.nav-item {
  height: 39.250px;
  display: flex;
  align-items: center;
  padding-left: 24px;
  font-size: 12.700px;
  font-weight: 500;
  color: #5f6368;
}
.nav-item svg {
  width: 19px;
  height: 19px;
  margin-right: 24px;
  fill: #5f6368;
}
.nav-on {
  color: #3367d6;
}
.nav-on svg {
  fill: #3367d6;
}
.nav-plain {
  justify-content: space-between;
  padding-right: 17px;
}
.nav-plain svg {
  margin-right: 0;
}
.nav-adv {
  margin-top: 8px;
  padding-right: 17px;
}
.nav-line {
  height: 2px;
  margin: 7px 0 8px;
  background: #eff0f2;
}
.nav-open {
  margin-right: 0;
}
.set-content {
  width: 668px;
  flex: none;
  margin-left: 85px;
  padding-top: 27px;
}
.set-content h2 {
  height: 20px;
  margin: 0 0 17px;
  font-size: 14px;
  font-weight: 400;
  line-height: 20px;
  letter-spacing: .15px;
  color: #3c4043;
}
.set-content .h-second {
  margin: 30px 0 16px;
}
.exp {
  color: #d93025;
}
.card {
  background: #fff;
  border-radius: 3px;
  box-shadow: 0 1px 3px rgba(60, 64, 67, .35), 0 1px 4px rgba(60, 64, 67, .12);
}
.row-toggle {
  height: 63px;
  display: flex;
  align-items: center;
  padding: 0 22px 2px 20px;
}
.row-text {
  flex: 1;
  min-width: 0;
}
.row-label {
  font-size: 12.800px;
  line-height: 20px;
  color: #3c4043;
}
.row-sub {
  font-size: 12.800px;
  line-height: 20px;
  color: #696c70;
}
.toggle {
  width: 31px;
  height: 12px;
  position: relative;
  border-radius: 6px;
  background: #bdc1c6;
}
.toggle::before {
  content: "";
  position: absolute;
  left: 0;
  top: -2px;
  width: 16px;
  height: 16px;
  border-radius: 50%;
  background: #fff;
  box-shadow: 0 1px 3px rgba(0, 0, 0, .4);
}
.row-link {
  height: 64px;
  display: flex;
  align-items: center;
  padding: 0 19px 2px 20px;
  border-top: 1px solid #eeeff1;
}
.row-first {
  height: 62px;
  border-top: 0;
}
.row-icon {
  width: 20px;
  height: 20px;
  margin-right: 15px;
  fill: #5f6368;
}
.row-arrow {
  width: 20px;
  height: 20px;
  fill: #5f6368;
}
.card-sync {
  height: 80px;
  display: flex;
  padding: 11px 19px 0 20px;
}
.card-sync p {
  flex: 1;
  margin: 0;
  font-size: 12.800px;
  line-height: 20px;
  color: #3c4043;
}
.card-sync a {
  color: #3367d6;
}
.sync-side {
  height: 34px;
  margin: 4px 0 0 10px;
  padding-left: 16px;
  border-left: 1px solid #e8e9eb;
}
.manage {
  width: 80px;
  height: 31px;
  border: 1px solid #dadce0;
  border-radius: 4px;
  color: #2f7de1;
  font-size: 13px;
  font-weight: 500;
  line-height: 29px;
  text-align: center;
}
.scrollbar {
  width: 16px;
  flex: none;
  margin-left: auto;
  display: flex;
  flex-direction: column;
  align-items: center;
  background: #f1f1f1;
}
.sb-up, .sb-down {
  width: 0;
  height: 0;
  border-left: 4px solid transparent;
  border-right: 4px solid transparent;
}
.sb-up {
  margin-top: 7px;
  border-bottom: 4px solid #333;
}
.sb-down {
  margin-top: auto;
  margin-bottom: 8px;
  border-top: 4px solid #333;
}
.sb-thumb {
  width: 13px;
  height: 220px;
  margin-top: 119px;
  background: #c1c1c1;
}
```
